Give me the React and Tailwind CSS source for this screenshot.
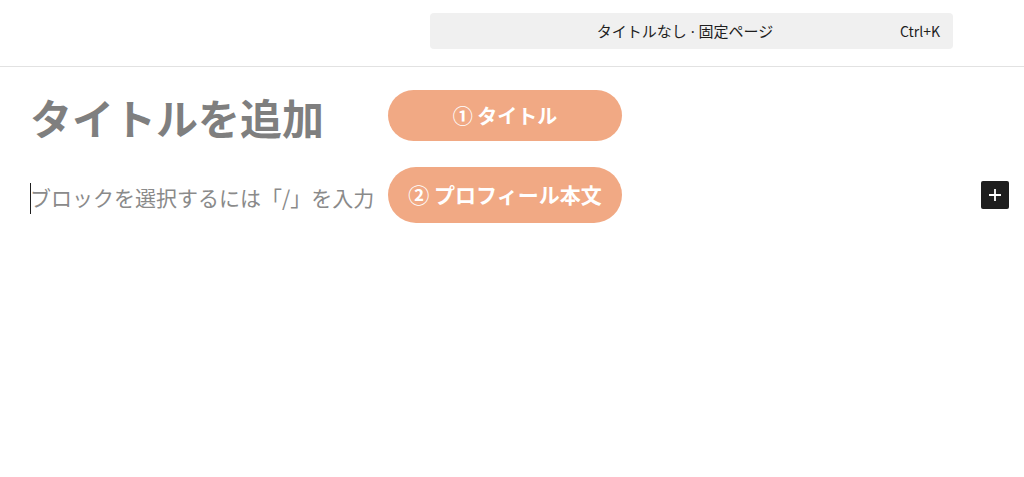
import React from "react";

const jp = { fontFamily: '"Noto Sans CJK JP", "Noto Sans", sans-serif' };

function Pill({ children, className }) {
  return (
    <div
      className={`absolute left-[388px] w-[234px] flex items-center justify-center rounded-full bg-[#f1a984] text-white font-bold ${className}`}
      style={jp}
    >
      {children}
    </div>
  );
}

export default function App() {
  return (
    <div className="relative w-[1024px] h-[477px] bg-white overflow-hidden" style={jp}>
      {/* Header */}
      <div className="h-[67px] border-b border-[#e2e2e2] flex items-start pt-[13px]">
        <div className="ml-[430px] w-[523px] h-[36px] rounded-[4px] bg-[#f0f0f0] flex items-center text-[15px] text-[#1e1e1e]">
          <div className="flex-1 text-center pl-[40px]">
            タイトルなし<span style={{ fontFamily: '"Noto Sans", sans-serif' }}> · </span>固定ページ
          </div>
          <div className="pr-[13px] text-[14px]">Ctrl+K</div>
        </div>
      </div>

      {/* Editor */}
      <div className="px-[30px] pt-[22px]">
        <div className="text-[42px] leading-[56px] font-bold text-[#7f7f7f]">
          タイトルを追加
        </div>
        <div className="mt-[37px] flex items-center h-[32px]">
          <span className="w-px h-[31px] bg-[#1e1e1e] mr-[-1px]" />
          <span className="text-[21px] text-[#8a8a8a]">ブロックを選択するには「/」を入力</span>
        </div>
      </div>

      <button className="absolute left-[981px] top-[181px] w-[28px] h-[28px] rounded-[2px] bg-[#1e1e1e] flex items-center justify-center">
        <svg width="16" height="16" viewBox="0 0 16 16">
          <path d="M8 2v12M2 8h12" stroke="white" strokeWidth="1.8" />
        </svg>
      </button>

      <Pill className="top-[90px] h-[51px] text-[20px]">① タイトル</Pill>
      <Pill className="top-[167px] h-[56px] text-[21px]">② プロフィール本文</Pill>
    </div>
  );
}
